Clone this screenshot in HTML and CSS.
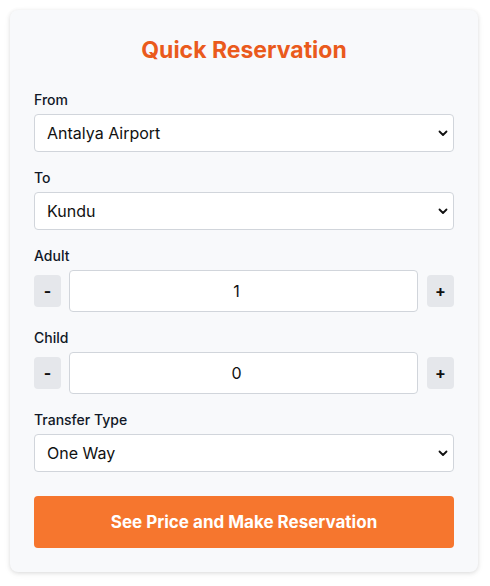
FILE: index.html
```html
<!DOCTYPE html>
<html lang="en">
<head>
    <meta charset="UTF-8">
    <meta name="viewport" content="width=device-width, initial-scale=1.0">
    <title>Quick Reservation</title>
    <link rel="stylesheet" href="styles.css">
</head>
<body>
    <div class="card">
        <h1 class="title">Quick Reservation</h1>

        <div class="form-group">
            <label for="from">From</label>
            <div class="select-wrap">
                <select id="from">
                    <option>Antalya Airport</option>
                </select>
                <svg class="chevron" width="10" height="10" viewBox="0 0 10 10"><path d="M1.5 3.5 L5 7 L8.5 3.5" fill="none" stroke="#111" stroke-width="1.8" stroke-linecap="round" stroke-linejoin="round"/></svg>
            </div>
        </div>

        <div class="form-group">
            <label for="to">To</label>
            <div class="select-wrap">
                <select id="to">
                    <option>Kundu</option>
                </select>
                <svg class="chevron" width="10" height="10" viewBox="0 0 10 10"><path d="M1.5 3.5 L5 7 L8.5 3.5" fill="none" stroke="#111" stroke-width="1.8" stroke-linecap="round" stroke-linejoin="round"/></svg>
            </div>
        </div>

        <div class="form-group">
            <label for="adult">Adult</label>
            <div class="stepper">
                <button class="step-btn" type="button">-</button>
                <input type="text" id="adult" value="1">
                <button class="step-btn" type="button">+</button>
            </div>
        </div>

        <div class="form-group">
            <label for="child">Child</label>
            <div class="stepper">
                <button class="step-btn" type="button">-</button>
                <input type="text" id="child" value="0">
                <button class="step-btn" type="button">+</button>
            </div>
        </div>

        <div class="form-group">
            <label for="transfer">Transfer Type</label>
            <div class="select-wrap">
                <select id="transfer">
                    <option>One Way</option>
                    <option>Round Trip</option>
                </select>
                <svg class="chevron" width="10" height="10" viewBox="0 0 10 10"><path d="M1.5 3.5 L5 7 L8.5 3.5" fill="none" stroke="#111" stroke-width="1.8" stroke-linecap="round" stroke-linejoin="round"/></svg>
            </div>
        </div>

        <button class="submit-btn" type="button">See Price and Make Reservation</button>
    </div>
</body>
</html>
```

FILE: styles.css
```css
body {
    font-family: Inter, "Liberation Sans", Arial, sans-serif;
    background-color: #ffffff;
    margin: 0;
    padding: 10px;
}

.card {
    width: 468px;
    box-sizing: border-box;
    background-color: #f8f9fb;
    border-radius: 8px;
    box-shadow: 0 1px 4px rgba(0,0,0,0.12), 0 2px 8px rgba(0,0,0,0.04);
    padding: 24px;
}

.title {
    margin: 0 0 24px;
    text-align: center;
    color: #ea5a1c;
    font-size: 23px;
    line-height: 32px;
    font-weight: 700;
}

.form-group {
    margin-bottom: 16px;
}

label {
    display: block;
    margin-bottom: 4px;
    font-size: 14px;
    line-height: 20px;
    font-weight: 500;
    color: #111827;
}

.select-wrap {
    position: relative;
}

select {
    -webkit-appearance: none;
    appearance: none;
    width: 100%;
    height: 38px;
    box-sizing: border-box;
    padding: 0 30px 0 12px;
    border: 1px solid #d1d5db;
    border-radius: 4px;
    background-color: #fff;
    font-family: inherit;
    font-size: 16px;
    color: #111;
}

.chevron {
    position: absolute;
    right: 6px;
    top: 14px;
    pointer-events: none;
}

.stepper {
    display: flex;
    align-items: center;
}

.step-btn {
    width: 27px;
    height: 32px;
    padding: 0;
    border: none;
    border-radius: 4px;
    background-color: #e5e7eb;
    font-family: inherit;
    font-size: 16px;
    font-weight: 700;
    color: #111;
}

.stepper input {
    flex: 1;
    min-width: 0;
    height: 42px;
    box-sizing: border-box;
    margin: 0 9px 0 8px;
    padding: 0 15px 0 1px;
    border: 1px solid #d1d5db;
    border-radius: 4px;
    background-color: #fff;
    text-align: center;
    font-family: inherit;
    font-size: 16px;
    color: #111;
}

.submit-btn {
    display: block;
    width: 100%;
    height: 52px;
    margin-top: 24px;
    border: none;
    border-radius: 4px;
    background-color: #f6762e;
    color: #fff;
    font-family: inherit;
    font-size: 17px;
    font-weight: 700;
}
```
